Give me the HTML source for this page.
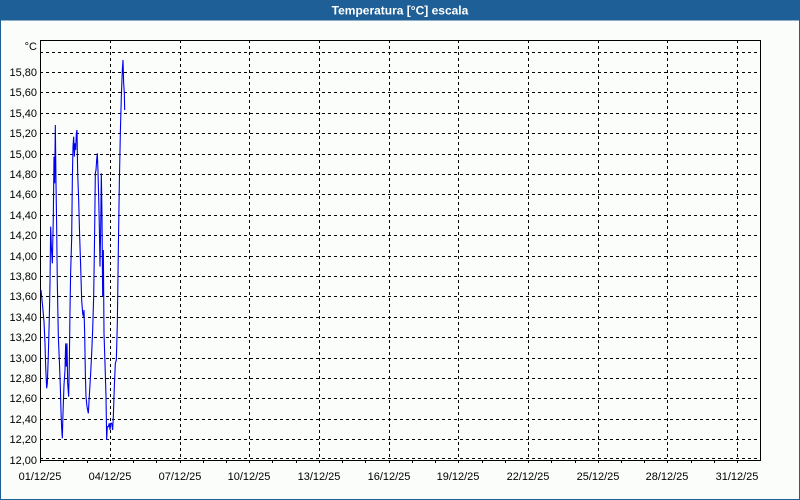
<!DOCTYPE html>
<html><head><style>
body{margin:0;width:800px;height:500px;overflow:hidden;background:#fbfdfb;font-family:"Liberation Sans",sans-serif;}
</style></head><body>
<svg width="800" height="500" xmlns="http://www.w3.org/2000/svg" style="position:absolute;left:0;top:0">
<rect x="0" y="0" width="800" height="500" fill="#fbfdfb"/>
<rect x="0" y="0" width="800" height="20" fill="#1f5f97"/>
<rect x="0.5" y="20" width="799" height="479.5" fill="none" stroke="#1f5f97" stroke-width="1"/>
<text x="400" y="14.5" fill="#fff" font-size="12" font-weight="bold" text-anchor="middle">Temperatura [°C] escala</text>
<g stroke="#000" stroke-width="1" stroke-dasharray="3,3" shape-rendering="crispEdges">
<line x1="40" x2="760" y1="52.5" y2="52.5"/><line x1="40" x2="760" y1="72.5" y2="72.5"/><line x1="40" x2="760" y1="92.5" y2="92.5"/><line x1="40" x2="760" y1="113.5" y2="113.5"/><line x1="40" x2="760" y1="133.5" y2="133.5"/><line x1="40" x2="760" y1="154.5" y2="154.5"/><line x1="40" x2="760" y1="174.5" y2="174.5"/><line x1="40" x2="760" y1="194.5" y2="194.5"/><line x1="40" x2="760" y1="215.5" y2="215.5"/><line x1="40" x2="760" y1="235.5" y2="235.5"/><line x1="40" x2="760" y1="256.5" y2="256.5"/><line x1="40" x2="760" y1="276.5" y2="276.5"/><line x1="40" x2="760" y1="296.5" y2="296.5"/><line x1="40" x2="760" y1="317.5" y2="317.5"/><line x1="40" x2="760" y1="337.5" y2="337.5"/><line x1="40" x2="760" y1="358.5" y2="358.5"/><line x1="40" x2="760" y1="378.5" y2="378.5"/><line x1="40" x2="760" y1="398.5" y2="398.5"/><line x1="40" x2="760" y1="419.5" y2="419.5"/><line x1="40" x2="760" y1="439.5" y2="439.5"/><line x1="40" x2="760" y1="458.5" y2="458.5"/>
<line x1="110.5" x2="110.5" y1="40" y2="460"/><line x1="180.5" x2="180.5" y1="40" y2="460"/><line x1="249.5" x2="249.5" y1="40" y2="460"/><line x1="319.5" x2="319.5" y1="40" y2="460"/><line x1="389.5" x2="389.5" y1="40" y2="460"/><line x1="458.5" x2="458.5" y1="40" y2="460"/><line x1="528.5" x2="528.5" y1="40" y2="460"/><line x1="598.5" x2="598.5" y1="40" y2="460"/><line x1="667.5" x2="667.5" y1="40" y2="460"/><line x1="737.5" x2="737.5" y1="40" y2="460"/>
</g>
<rect x="40.5" y="40.5" width="720" height="420" fill="none" stroke="#000" stroke-width="1" shape-rendering="crispEdges"/>
<g stroke="#000" stroke-width="1" shape-rendering="crispEdges">
<line x1="40.5" x2="40.5" y1="460" y2="463"/><line x1="63.5" x2="63.5" y1="460" y2="463"/><line x1="87.5" x2="87.5" y1="460" y2="463"/><line x1="110.5" x2="110.5" y1="460" y2="463"/><line x1="133.5" x2="133.5" y1="460" y2="463"/><line x1="156.5" x2="156.5" y1="460" y2="463"/><line x1="180.5" x2="180.5" y1="460" y2="463"/><line x1="203.5" x2="203.5" y1="460" y2="463"/><line x1="226.5" x2="226.5" y1="460" y2="463"/><line x1="249.5" x2="249.5" y1="460" y2="463"/><line x1="272.5" x2="272.5" y1="460" y2="463"/><line x1="296.5" x2="296.5" y1="460" y2="463"/><line x1="319.5" x2="319.5" y1="460" y2="463"/><line x1="342.5" x2="342.5" y1="460" y2="463"/><line x1="365.5" x2="365.5" y1="460" y2="463"/><line x1="389.5" x2="389.5" y1="460" y2="463"/><line x1="412.5" x2="412.5" y1="460" y2="463"/><line x1="435.5" x2="435.5" y1="460" y2="463"/><line x1="458.5" x2="458.5" y1="460" y2="463"/><line x1="482.5" x2="482.5" y1="460" y2="463"/><line x1="505.5" x2="505.5" y1="460" y2="463"/><line x1="528.5" x2="528.5" y1="460" y2="463"/><line x1="551.5" x2="551.5" y1="460" y2="463"/><line x1="575.5" x2="575.5" y1="460" y2="463"/><line x1="598.5" x2="598.5" y1="460" y2="463"/><line x1="621.5" x2="621.5" y1="460" y2="463"/><line x1="644.5" x2="644.5" y1="460" y2="463"/><line x1="667.5" x2="667.5" y1="460" y2="463"/><line x1="691.5" x2="691.5" y1="460" y2="463"/><line x1="714.5" x2="714.5" y1="460" y2="463"/><line x1="737.5" x2="737.5" y1="460" y2="463"/>
</g>
<g font-size="11" fill="#000" text-anchor="end">
<text x="37" y="50">°C</text>
<text x="37" y="76">15,80</text><text x="37" y="96">15,60</text><text x="37" y="117">15,40</text><text x="37" y="137">15,20</text><text x="37" y="158">15,00</text><text x="37" y="178">14,80</text><text x="37" y="198">14,60</text><text x="37" y="219">14,40</text><text x="37" y="239">14,20</text><text x="37" y="260">14,00</text><text x="37" y="280">13,80</text><text x="37" y="300">13,60</text><text x="37" y="321">13,40</text><text x="37" y="341">13,20</text><text x="37" y="362">13,00</text><text x="37" y="382">12,80</text><text x="37" y="402">12,60</text><text x="37" y="423">12,40</text><text x="37" y="443">12,20</text><text x="37" y="464">12,00</text>
</g>
<g font-size="11" fill="#000" text-anchor="middle">
<text x="40" y="480">01/12/25</text><text x="110" y="480">04/12/25</text><text x="180" y="480">07/12/25</text><text x="249" y="480">10/12/25</text><text x="319" y="480">13/12/25</text><text x="389" y="480">16/12/25</text><text x="458" y="480">19/12/25</text><text x="528" y="480">22/12/25</text><text x="598" y="480">25/12/25</text><text x="667" y="480">28/12/25</text><text x="737" y="480">31/12/25</text>
</g>
<g transform="translate(30,50) scale(0.33333)">
<polyline fill="none" stroke="#0000ee" stroke-width="3.3" points="33,720 38,770 42,815 45,880 47,950 50,1015 52,1000 55,915 58,800 60,700 62,530 64,590 67,640 70,500 72,320 74,400 76,225 78,400 80,530 82,700 85,860 88,930 91,1010 93,1085 95,1135 97,1165 99,1090 102,1005 105,960 107,880 109,950 111,880 113,1000 116,1040 118,940 120,780 122,665 125,565 127,390 129,290 131,260 133,320 135,280 137,300 139,250 141,240 143,370 146,450 149,560 152,650 155,750 158,790 160,800 162,780 164,850 166,970 168,1040 171,1070 175,1090 179,1020 182,970 185,910 188,840 191,740 194,540 196,370 198,360 200,330 202,310 204,365 206,440 208,530 210,650 212,540 214,370 216,500 218,740 220,600 222,850 225,940 228,1040 230,1170 232,1130 235,1130 238,1120 240,1140 242,1120 245,1120 248,1140 250,1100 253,1010 256,940 259,930 262,820 265,600 268,400 271,250 274,140 277,60 279,30 281,100 283,130 284,180"/>
</g>
</svg>
</body></html>
